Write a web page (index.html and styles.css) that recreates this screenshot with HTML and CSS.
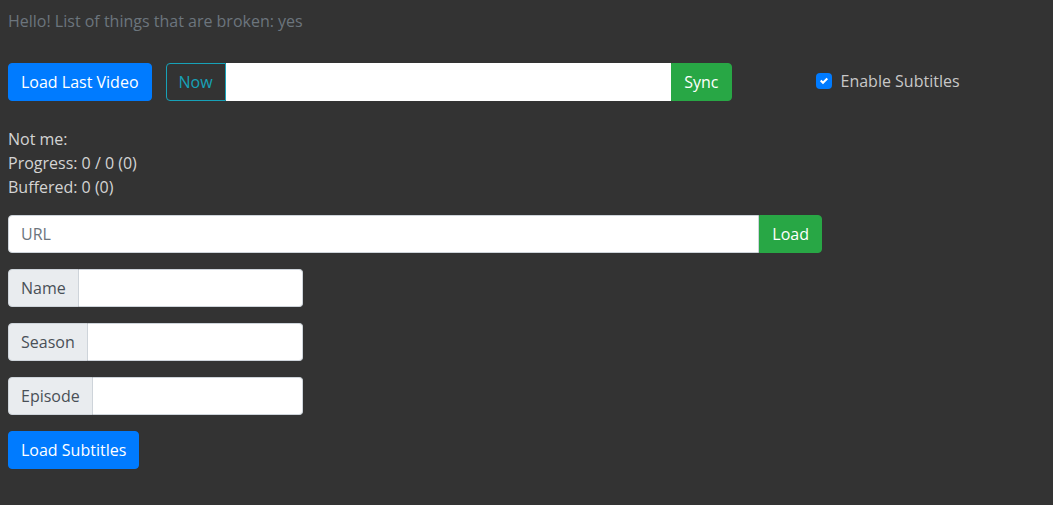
FILE: index.html
```html
<!DOCTYPE html>
<html>
<head>
<meta charset="utf-8">
<link rel="stylesheet" href="styles.css">
</head>
<body>
<p class="hello">Hello! List of things that are broken: yes</p>

<div class="toolbar">
  <button class="btn btn-primary">Load Last Video</button>
  <div class="input-group sync-group">
    <button class="btn btn-outline-info btn-left">Now</button>
    <input class="form-control mid" type="text">
    <button class="btn btn-success btn-right">Sync</button>
  </div>
  <label class="check">
    <span class="box"><svg viewBox="0 0 8 8" width="8" height="8"><path d="M6.564.75l-3.59 3.612-1.538-1.55L0 4.26l2.974 2.99L8 2.193z" fill="#fff"/></svg></span>
    <span>Enable Subtitles</span>
  </label>
</div>

<div class="status">
  <div>Not me:</div>
  <div>Progress: 0 / 0 (0)</div>
  <div>Buffered: 0 (0)</div>
</div>

<div class="input-group url-group">
  <input class="form-control first" type="text" placeholder="URL">
  <button class="btn btn-success btn-right">Load</button>
</div>

<div class="input-group small-group">
  <span class="addon">Name</span>
  <input class="form-control last" type="text">
</div>
<div class="input-group small-group">
  <span class="addon">Season</span>
  <input class="form-control last" type="text">
</div>
<div class="input-group small-group">
  <span class="addon">Episode</span>
  <input class="form-control last" type="text">
</div>

<button class="btn btn-primary">Load Subtitles</button>
</body>
</html>
```

FILE: styles.css
```css
html, body {
  background: #333333;
}
body {
  margin: 0;
  padding: 9px 8px 8px;
  font-family: "Open Sans", "Noto Sans", sans-serif;
  font-size: 16px;
  line-height: 24px;
  color: #d4d4d4;
}
.hello {
  margin: 0 0 30px;
  color: #6c757d;
}
.btn {
  font-family: inherit;
  font-size: 16px;
  line-height: 24px;
  padding: 6px 12px;
  border: 1px solid transparent;
  border-radius: 4px;
  cursor: pointer;
  height: 38px;
}
.btn-primary {
  background: #007bff;
  border-color: #007bff;
  color: #fff;
}
.btn-success {
  background: #28a745;
  border-color: #28a745;
  color: #fff;
}
.btn-outline-info {
  background: transparent;
  border-color: #17a2b8;
  color: #17a2b8;
}
.toolbar {
  display: flex;
  align-items: center;
  gap: 14px;
  margin-bottom: 26px;
}
.input-group {
  display: flex;
  align-items: stretch;
  height: 38px;
}
.form-control {
  font-family: inherit;
  font-size: 16px;
  line-height: 24px;
  padding: 6px 12px;
  height: 38px;
  box-sizing: border-box;
  border: 1px solid #ced4da;
  background: #fff;
  color: #495057;
  outline: none;
  min-width: 0;
}
.form-control::placeholder {
  color: #6c757d;
}
.btn-left {
  border-radius: 4px 0 0 4px;
}
.btn-right {
  border-radius: 0 4px 4px 0;
}
.mid {
  border-radius: 0;
  flex: 1;
}
.first {
  border-radius: 4px 0 0 4px;
  flex: 1;
}
.last {
  border-radius: 0 4px 4px 0;
  flex: 1;
  border-left: 0;
}
.sync-group {
  width: 566px;
}
.sync-group .mid {
  border-color: #fff;
}
.check {
  display: flex;
  align-items: center;
  gap: 9px;
  margin-left: 70px;
  margin-bottom: 2px;
  color: #c8c8c8;
}
.box {
  width: 16px;
  height: 16px;
  border-radius: 4px;
  background: #007bff;
  display: flex;
  align-items: center;
  justify-content: center;
}
.box svg {
  display: block;
}
.status {
  margin-bottom: 16px;
}
.url-group {
  width: 814px;
  margin-bottom: 16px;
}
.small-group {
  width: 295px;
  margin-bottom: 16px;
}
.addon {
  display: flex;
  align-items: center;
  padding: 6px 12px;
  background: #e9ecef;
  border: 1px solid #ced4da;
  border-radius: 4px 0 0 4px;
  color: #495057;
  box-sizing: border-box;
}
```
